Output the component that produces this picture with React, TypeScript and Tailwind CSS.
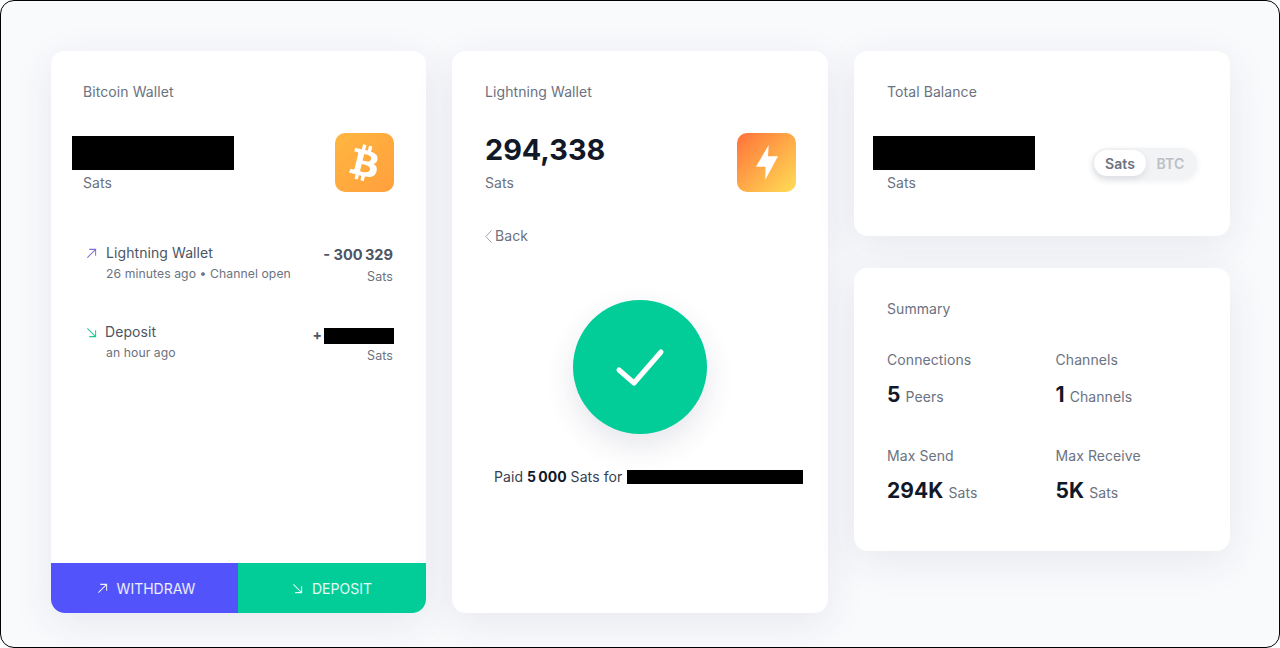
import React from 'react'
import { FaBtc } from 'react-icons/fa'

const font = { fontFamily: 'Inter, "Noto Sans", sans-serif' }

// Small diagonal arrows used in the list and the buttons
const ArrowUpRight = ({ className }: { className: string }) => (
    <svg className={className} viewBox="0 0 12 12" fill="none" stroke="currentColor" strokeWidth="1.1">
        <path d="M1.5 10.5L10.5 1.5M3.5 1.5H10.5V8.5" />
    </svg>
)

const ArrowDownRight = ({ className }: { className: string }) => (
    <svg className={className} viewBox="0 0 12 12" fill="none" stroke="currentColor" strokeWidth="1.1">
        <path d="M1.5 1.5L10.5 10.5M10.5 3.5V10.5H3.5" />
    </svg>
)

const Card = ({ className, children }: { className: string; children: React.ReactNode }) => (
    <div className={`bg-white rounded-[14px] shadow-[0_10px_40px_rgba(50,60,100,0.09)] ${className}`}>{children}</div>
)

const Stat = ({ label, value, unit, className }: { label: string; value: string; unit: string; className: string }) => (
    <div className={className}>
        <div className="text-[14px] leading-[20px] text-[#6b7280]">{label}</div>
        <div className="mt-[10px] flex items-baseline h-[30px]">
            <span className="text-[21px] leading-[30px] font-bold text-[#111827]">{value}</span>
            <span className="ml-[5px] text-[14px] text-[#6b7280]">{unit}</span>
        </div>
    </div>
)

const App = () => {
    return (
        <div style={font} className="bg-white w-[1280px] h-[648px] overflow-hidden tracking-[0.005em]">
            <div className="h-full bg-[#f9fafc] border border-black rounded-[14px] pl-[50px] pt-[50px] grid grid-cols-[375px_376px_376px] gap-x-[26px] items-start">
                {/* Bitcoin wallet */}
                <Card className="h-[562px] flex flex-col overflow-hidden">
                    <div className="flex-1 pl-[32px] pr-[32px] pt-[31px]">
                        <div className="text-[14px] leading-[20px] text-[#6b7280]">Bitcoin Wallet</div>
                        <div className="mt-[31px] flex justify-between">
                            <div>
                                <div className="mt-[3px] -ml-[11px] w-[162px] h-[34px] bg-black" />
                                <div className="mt-[3px] text-[14px] leading-[20px] text-[#6b7280]">Sats</div>
                            </div>
                            <div className="w-[59px] h-[59px] rounded-[10px] bg-gradient-to-br from-[#ffb640] to-[#ff9f3c] flex items-center justify-center">
                                <FaBtc className="text-white w-[28px] h-[36px] rotate-[14deg]" />
                            </div>
                        </div>
                        <div className="mt-[50px] pl-[3px] pr-[1px] flex justify-between">
                            <div>
                                <div className="flex items-center text-[14px] leading-[20px] text-[#4b5563]">
                                    <ArrowUpRight className="w-[11px] h-[11px] text-[#7c6fd8] mr-[9px]" />
                                    Lightning Wallet
                                </div>
                                <div className="mt-[1px] ml-[20px] text-[12.2px] leading-[20px] text-[#6b7280]">26 minutes ago • Channel open</div>
                            </div>
                            <div className="text-right pt-[2px]">
                                <div className="text-[14.6px] leading-[20px] font-bold text-[#4b5563] tracking-normal">- 300{'\u2009'}329</div>
                                <div className="mt-[2px] text-[12.5px] leading-[20px] text-[#6b7280]">Sats</div>
                            </div>
                        </div>
                        <div className="mt-[35px] pl-[3px] pr-[1px] flex justify-between">
                            <div>
                                <div className="flex items-center text-[14px] leading-[20px] text-[#4b5563]">
                                    <ArrowDownRight className="w-[11px] h-[11px] text-[#1dc99a] mr-[8px]" />
                                    Deposit
                                </div>
                                <div className="mt-[1px] ml-[20px] text-[12.2px] leading-[20px] text-[#6b7280]">an hour ago</div>
                            </div>
                            <div className="text-right pt-[2px]">
                                <div className="flex items-center justify-end h-[20px] -mr-[1px] text-[14px] font-bold text-[#4b5563]">
                                    +<span className="mt-[3px] ml-[2px] w-[70px] h-[16px] bg-black" />
                                </div>
                                <div className="mt-[2px] text-[12.5px] leading-[20px] text-[#6b7280]">Sats</div>
                            </div>
                        </div>
                    </div>
                    <div className="grid grid-cols-[187px_188px] h-[50px] text-[14px] text-white/90 tracking-normal">
                        <div className="bg-[#5353fb] pl-[3px] flex items-center justify-center gap-[9px]">
                            <ArrowUpRight className="w-[11px] h-[11px]" />
                            WITHDRAW
                        </div>
                        <div className="bg-[#02cd99] flex items-center justify-center gap-[9px]">
                            <ArrowDownRight className="w-[11px] h-[11px]" />
                            DEPOSIT
                        </div>
                    </div>
                </Card>

                {/* Lightning wallet */}
                <Card className="h-[562px] pl-[33px] pr-[32px] pt-[31px]">
                    <div className="text-[14px] leading-[20px] text-[#6b7280]">Lightning Wallet</div>
                    <div className="mt-[31px] flex justify-between">
                        <div>
                            <div className="text-[28.8px] leading-[34px] font-bold text-[#111827] tracking-normal">294,338</div>
                            <div className="mt-[6px] text-[14px] leading-[20px] text-[#6b7280]">Sats</div>
                        </div>
                        <div className="w-[59px] h-[59px] rounded-[10px] bg-gradient-to-br from-[#ff6f3a] to-[#ffdd55] flex items-center justify-center">
                            <svg className="w-[22px] h-[35px]" viewBox="0 0 22 35">
                                <path fill="white" d="M12.700 0L0 21.700H9.500L9.300 34.700L22 11.300H12Z" />
                            </svg>
                        </div>
                    </div>
                    <div className="mt-[33px] flex items-center text-[14px] leading-[20px] text-[#6b7280]">
                        <svg className="w-[7px] h-[13px] mr-[3px] text-[#9ca3af]" viewBox="0 0 7 13" fill="none" stroke="currentColor" strokeWidth="1">
                            <path d="M6.500 0.500L0.800 6.500L6.500 12.500" />
                        </svg>
                        Back
                    </div>
                    <div className="mt-[54px] pr-[1px] flex justify-center">
                        <div className="w-[134px] h-[134px] rounded-full bg-[#02cd99] shadow-[0_12px_30px_rgba(40,50,90,0.12)] flex items-center justify-center">
                            <svg className="w-[50px] h-[40px]" viewBox="0 0 50 40" fill="none" stroke="white" strokeWidth="5" strokeLinecap="round" strokeLinejoin="round">
                                <path d="M4 23L19 36L46 5" />
                            </svg>
                        </div>
                    </div>
                    <div className="mt-[33px] ml-[9px] flex items-center text-[14px] leading-[20px] text-[#374151] whitespace-nowrap">
                        Paid&nbsp;<span className="font-bold text-[#111827] tracking-normal">5{'\u2009'}000</span>&nbsp;Sats for
                        <span className="shrink-0 ml-[5px] w-[176px] h-[14px] bg-black" />
                    </div>
                </Card>

                <div className="flex flex-col gap-y-[32px]">
                    {/* Total balance */}
                    <Card className="h-[185px] pl-[33px] pr-[33px] pt-[31px]">
                        <div className="text-[14px] leading-[20px] text-[#6b7280]">Total Balance</div>
                        <div className="mt-[31px] flex justify-between items-center">
                            <div>
                                <div className="mt-[3px] -ml-[14px] w-[162px] h-[34px] bg-black" />
                                <div className="mt-[3px] text-[14px] leading-[20px] text-[#6b7280]">Sats</div>
                            </div>
                            <div className="flex items-center h-[31px] w-[105px] p-[2px] rounded-full bg-[#f1f3f4] shadow-[0_2px_6px_rgba(40,50,90,0.08)] text-[14px] font-semibold">
                                <div className="w-[52px] h-[26px] rounded-full bg-white shadow-[0_3px_6px_rgba(40,50,90,0.1)] flex items-center justify-center text-[#6b7280]">Sats</div>
                                <div className="flex-1 text-center text-[#bcc0c5]">BTC</div>
                            </div>
                        </div>
                    </Card>

                    {/* Summary */}
                    <Card className="h-[283px] pl-[33px] pr-[32px] pt-[31px]">
                        <div className="text-[14px] leading-[20px] text-[#6b7280]">Summary</div>
                        <div className="mt-[31px] grid grid-cols-2 gap-y-[36px]">
                            <Stat label="Connections" value="5" unit="Peers" className="" />
                            <Stat label="Channels" value="1" unit="Channels" className="pl-[13px]" />
                            <Stat label="Max Send" value="294K" unit="Sats" className="" />
                            <Stat label="Max Receive" value="5K" unit="Sats" className="pl-[13px]" />
                        </div>
                    </Card>
                </div>
            </div>
        </div>
    )
}

export default App
